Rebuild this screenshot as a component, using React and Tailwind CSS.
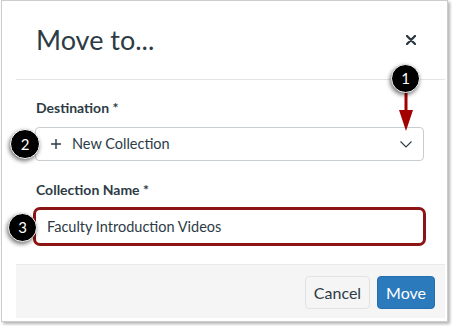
import React from "react";

function Badge({ n, className }) {
  return (
    <div
      className={`absolute flex items-center justify-center rounded-full bg-black border-[1.5px] border-white text-white text-[15px] shadow-[-1px_2px_4px_rgba(0,0,0,0.55)] ${className}`}
    >
      {n}
    </div>
  );
}

export default function App() {
  return (
    <div className="relative w-[452px] h-[326px] overflow-hidden bg-white font-['Lato',sans-serif] text-[#2d3b45]">
      <div className="ml-px w-[447px] h-[322px] border border-[#cccccc] bg-white shadow-[2px_2px_3px_rgba(0,0,0,0.3)] pl-[14px] pr-[2px] pb-[3px] flex flex-col">
        {/* Header */}
        <div className="h-[79px] border-b border-[#e4e4e4] flex items-center justify-between">
          <h1 className="ml-[20px] text-[27px] leading-[32px] font-normal">Move to...</h1>
          <svg width="10" height="10" viewBox="0 0 10 10" className="mr-[29px]">
            <path d="M1 1L9 9M9 1L1 9" stroke="#2d3b45" strokeWidth="2.4" strokeLinecap="round" />
          </svg>
        </div>

        {/* Body */}
        <div className="flex-1 pl-[19px] pr-[21px] pt-[19px] flex flex-col">
          <label className="pl-px text-[14px] leading-[18px] font-bold mb-[10px]">Destination *</label>
          <div className="h-[34px] border border-[#c7cdd1] rounded-[4px] flex items-center pl-[15px] pr-[11px]">
            <svg width="10" height="10" viewBox="0 0 10 10">
              <path d="M5 0V10M0 5H10" stroke="#2d3b45" strokeWidth="1.4" />
            </svg>
            <span className="ml-[11px] text-[14.5px] flex-1">New Collection</span>
            <svg width="12" height="7" viewBox="0 0 12 7">
              <path d="M0.5 0.5L6 6L11.5 0.5" fill="none" stroke="#2d3b45" strokeWidth="1.1" />
            </svg>
          </div>

          <label className="mt-[20px] pl-px text-[14px] leading-[18px] font-bold mb-[8px]">Collection Name *</label>
          <div className="-mx-[2px] h-[39px] border-[3px] border-[#8b1414] rounded-[7px] flex items-center pl-[11px] text-[14.5px]">
            Faculty Introduction Videos
          </div>

          <div className="mt-[18px] h-[54px] -ml-[19px] -mr-[21px] bg-[#f5f5f5] border-t border-[#eaeaea] flex justify-end items-start pt-[11px] pr-[10px] gap-[7px]">
            <button className="w-[65px] h-[33px] rounded-[4px] bg-[#f5f5f5] border border-[#e2e2e2] text-[16px] text-[#2d3b45]">
              Cancel
            </button>
            <button className="w-[58px] h-[33px] rounded-[4px] bg-[#2b7abc] border border-[#2370b0] text-[16px] text-white">
              Move
            </button>
          </div>
        </div>
      </div>

      {/* Annotations */}
      <svg width="16" height="40" viewBox="0 0 16 40" className="absolute left-[398px] top-[92px]">
        <rect x="6.5" y="0" width="3" height="20" fill="#a30000" />
        <polygon points="1,18 15,18 8,39" fill="#a30000" />
      </svg>
      <Badge n="1" className="left-[391px] top-[64px] w-[29px] h-[29px]" />
      <Badge n="2" className="left-[10px] top-[129px] w-[30px] h-[30px]" />
      <Badge n="3" className="left-[8px] top-[213px] w-[29px] h-[29px]" />
    </div>
  );
}
